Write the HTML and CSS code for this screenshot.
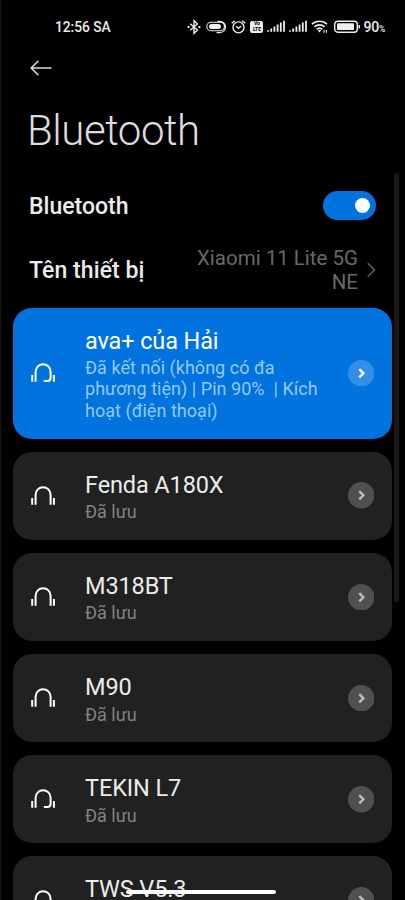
FILE: index.html
```
<!DOCTYPE html>
<html lang="vi">
<head>
<meta charset="utf-8">
<title>Bluetooth</title>
<link rel="stylesheet" href="styles.css">
</head>
<body>
<svg width="0" height="0" class="defs">
  <defs>
    <g id="phones"><path d="M4.6 18.8V8.7a7.5 7.5 0 0 1 15 0v10.1M1.2 12v6.8M22.9 12v6.8"/></g>
    <g id="headset"><path d="M4.6 18.8V8.7a7.5 7.5 0 0 1 15 0v6q0 3.2-3.2 3.2h-3.6M1.2 12v6.8M22.9 12v6.8"/></g>
    <g id="go"><circle class="disc" cx="13.25" cy="13.25" r="13.25"/><path d="m11.3 9.2 4.1 4.1-4.1 4.1"/></g>
    <g id="signal"><path d="M1 11.8v-1.6M4.2 11.8V8.4M7.4 11.8V6.4M10.6 11.8V4.4M13.8 11.8V2.4M17 11.8V.8"/></g>
  </defs>
</svg>
<div class="screen">
  <header class="status">
    <span class="time">12:56 SA</span>
    <div class="tray">
      <svg class="line" width="14" height="16" viewBox="0 0 14 16"><path d="m3.2 4.7 7.2 6.4L7 14.4V1.6l3.4 3.3-7.2 6.4"/><path d="M.6 8h1.9M11.5 8h1.9" stroke-width="2"/></svg>
      <svg class="line attach" width="21" height="16" viewBox="0 0 21 16"><path d="M12.5 2.2h2.3a5.7 5.7 0 0 1 0 11.4h-3.2M6 3.3h9.2a4.2 4.2 0 0 1 0 8.4H6a4.2 4.2 0 0 1 0-8.4Z" stroke-width="1.1"/><rect x="4" y="5" width="12" height="5" rx="2.5" fill="#eee" stroke="none"/></svg>
      <svg class="line alarm" width="15" height="16" viewBox="0 0 15 16"><circle cx="7.5" cy="8.4" r="5.5"/><path d="m.8 4.3 3-2.6M14.2 4.3l-3-2.6M5 7.2l2.5 2.2L10 7.2"/></svg>
      <span class="volte"><b>Vo</b><b>LTE</b></span>
      <svg class="line sig" width="18" height="13" viewBox="0 0 18 13"><use href="#signal"/></svg>
      <svg class="line sig" width="18" height="13" viewBox="0 0 18 13"><use href="#signal"/></svg>
      <svg class="line wifi" width="18" height="15" viewBox="0 0 18 15"><path d="M1 5.2a11 11 0 0 1 15 0M3.4 7.9a7.5 7.5 0 0 1 10.2 0M5.7 10.4a4.2 4.2 0 0 1 5.6 0" stroke-width="1.7"/><path d="m6.9 11.6 1.6 1.8 1.6-1.8a2.3 2.3 0 0 0-3.2 0Z" fill="#eee" stroke="none"/><path d="M13 11v2.8M15.4 11v2.8" stroke-width="1.1"/></svg>
      <svg class="line battery" width="27" height="14" viewBox="0 0 27 14"><rect x=".7" y="1.2" width="22.6" height="11" rx="3"/><rect x="3" y="3.3" width="17" height="6.8" rx="1" fill="#eee" stroke="none"/><path d="M25.2 5v3.6" stroke-width="1.5"/></svg>
      <span class="percent">90<small>%</small></span>
    </div>
  </header>
  <nav class="nav">
    <svg width="22" height="16" viewBox="0 0 22 16"><path d="M21 8H1.2M7.9 1.3 1.2 8l6.7 6.7"/></svg>
  </nav>
  <h1>Bluetooth</h1>
  <section class="row toggle-row">
    <h2>Bluetooth</h2>
    <span class="switch"><i></i></span>
  </section>
  <section class="row name-row">
    <h2>Tên thiết bị</h2>
    <p>Xiaomi 11 Lite 5G<br>NE</p>
    <svg width="9" height="16" viewBox="0 0 9 16"><path d="m.8 1.2 6.8 6.6L.8 14.6"/></svg>
  </section>
  <main class="devices">
    <article class="card active">
      <svg class="device" width="25" height="20" viewBox="0 0 25 20"><use href="#headset"/></svg>
      <div class="info"><h3>ava+ của Hải</h3><p>Đã kết nối (không có đa<br>phương tiện) | Pin 90%&nbsp; | Kích<br>hoạt (điện thoại)</p></div>
      <svg class="go" width="26.5" height="26.5" viewBox="0 0 26.5 26.5"><use href="#go"/></svg>
    </article>
    <article class="card">
      <svg class="device" width="25" height="20" viewBox="0 0 25 20"><use href="#phones"/></svg>
      <div class="info"><h3>Fenda A180X</h3><p>Đã lưu</p></div>
      <svg class="go" width="26.5" height="26.5" viewBox="0 0 26.5 26.5"><use href="#go"/></svg>
    </article>
    <article class="card">
      <svg class="device" width="25" height="20" viewBox="0 0 25 20"><use href="#phones"/></svg>
      <div class="info"><h3>M318BT</h3><p>Đã lưu</p></div>
      <svg class="go" width="26.5" height="26.5" viewBox="0 0 26.5 26.5"><use href="#go"/></svg>
    </article>
    <article class="card">
      <svg class="device" width="25" height="20" viewBox="0 0 25 20"><use href="#phones"/></svg>
      <div class="info"><h3>M90</h3><p>Đã lưu</p></div>
      <svg class="go" width="26.5" height="26.5" viewBox="0 0 26.5 26.5"><use href="#go"/></svg>
    </article>
    <article class="card">
      <svg class="device" width="25" height="20" viewBox="0 0 25 20"><use href="#headset"/></svg>
      <div class="info"><h3>TEKIN L7</h3><p>Đã lưu</p></div>
      <svg class="go" width="26.5" height="26.5" viewBox="0 0 26.5 26.5"><use href="#go"/></svg>
    </article>
    <article class="card">
      <svg class="device" width="25" height="20" viewBox="0 0 25 20"><use href="#phones"/></svg>
      <div class="info"><h3>TWS V5.3</h3></div>
      <svg class="go" width="26.5" height="26.5" viewBox="0 0 26.5 26.5"><use href="#go"/></svg>
    </article>
  </main>
  <div class="scrollbar"></div>
  <div class="home-bar"></div>
</div>
</body>
</html>
```
FILE: styles.css
```
* { box-sizing: border-box; }
html, body { height: 100%; overflow: hidden; }
body { margin: 0; background: #000; font-family: Roboto, "Noto Sans", sans-serif; color: #ececec; }
h1, h2, h3, p { margin: 0; font-weight: 400; }
svg { display: block; flex: none; fill: none; }
.defs { position: absolute; }
.screen { position: relative; height: 900px; overflow: hidden; border-left: 1px solid #161616; }

.status { display: flex; justify-content: space-between; align-items: center; height: 53px; padding: 0 20px 0 54px; }
.time { font-size: 13.8px; font-weight: 500; letter-spacing: -0.05px; }
.tray { display: flex; align-items: center; }
.line { stroke: #eee; stroke-width: 1.4; }
.attach { margin-left: 4px; }
.alarm { margin-left: 5px; }
.volte { display: flex; flex-direction: column; align-items: center; justify-content: center; width: 13px; height: 12px; margin-left: 4px; border-radius: 2px; background: #eee; color: #000; font-size: 5px; line-height: 5.5px; }
.sig { margin-left: 4px; stroke-width: 1.8; }
.wifi { margin-left: 4px; }
.battery { margin-left: 5px; }
.percent { margin-left: 2px; font-size: 14px; font-weight: 500; letter-spacing: -0.2px; white-space: nowrap; }
.percent small { font-size: 8.5px; }

.nav { display: flex; height: 30px; align-items: center; padding-left: 29px; }
.nav svg { stroke: #ddd; stroke-width: 1.6; stroke-linecap: round; }
h1 { height: 94px; padding-left: 26px; font-size: 42px; font-weight: 300; line-height: 95px; letter-spacing: -0.45px; color: #ddd; }

.row { display: flex; align-items: center; padding: 0 29px 0 28px; }
h2 { flex: 1; font-size: 23px; font-weight: 500; }
.toggle-row { height: 56px; }
.toggle-row h2 { padding-top: 2px; }
.switch { display: flex; align-items: center; justify-content: flex-end; width: 53px; height: 29px; padding-right: 6px; border-radius: 15px; background: #0073de; }
.switch i { width: 15px; height: 15px; border-radius: 50%; background: #fff; }
.name-row { height: 74.5px; }
.name-row h2 { letter-spacing: 0.08px; }
.name-row p { font-size: 20.5px; line-height: 24px; text-align: right; color: #686868; }
.name-row svg { margin-left: 9px; stroke: #686868; stroke-width: 1.3; }

.devices { display: flex; flex-direction: column; gap: 13.2px; padding: 0 13.5px 0 12px; }
.card { --disc: #505050; display: flex; flex: none; align-items: center; height: 88px; padding: 0 17.5px 0 18px; border-radius: 19px; background: #212121; }
.device { stroke: #fff; stroke-width: 2; }
.info { flex: 1; align-self: flex-start; margin: 19px 0 0 29px; }
.info h3 { font-size: 23.5px; line-height: 28px; letter-spacing: -0.12px; }
.info p { font-size: 18px; line-height: 21.3px; margin-top: 2.5px; color: #828282; white-space: nowrap; }
.disc { fill: var(--disc); stroke: none; }
.go { stroke: #bcbcbc; stroke-width: 2.4; }
.card.active { --disc: #338fe5; height: 131px; background: #0073de; }
.active h3 { color: #fff; }
.active p { letter-spacing: 0.03px; color: #94c9f4; }

.active .go { stroke: #fff; }

.scrollbar { position: absolute; right: 6px; top: 173px; width: 5px; height: 429px; border-radius: 3px; background: #191919; }
.home-bar { position: absolute; left: 125px; top: 890px; width: 150px; height: 4px; border-radius: 2px; background: #fff; }
```
